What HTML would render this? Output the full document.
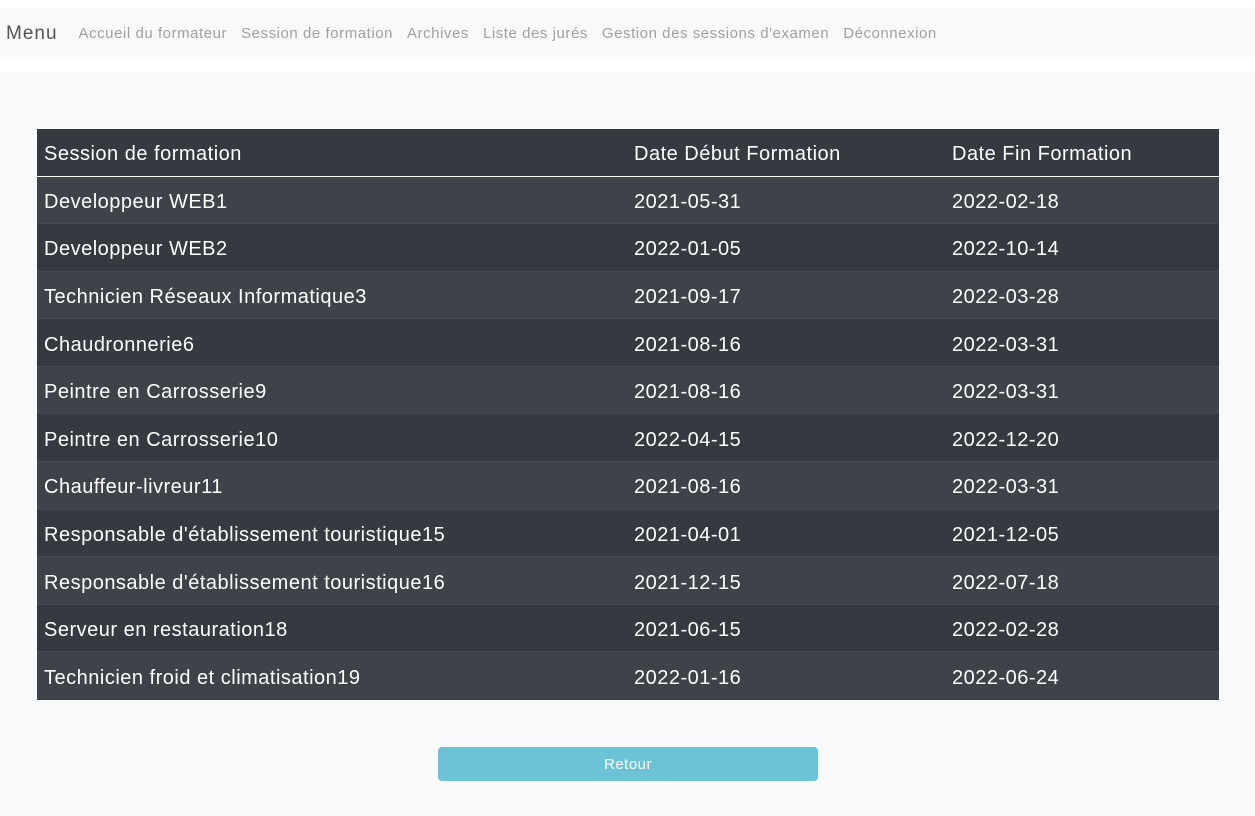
<!DOCTYPE html>
<html><head><meta charset="utf-8"><style>
body{margin:0;background:#f8f9fa;font-family:"Liberation Sans",sans-serif;}
.top{height:8px;background:#fff}
nav{height:49px;box-sizing:border-box;padding-top:2px;background:#f8f9fa;display:flex;align-items:center;font-size:15px;letter-spacing:.55px;color:#a0a0a0}
nav .b{font-size:19px;letter-spacing:1px;color:#555;margin-left:6px;margin-right:21px}
nav span{margin-right:14px}
.gap{height:15px;background:#fff}
table{position:absolute;left:37px;top:129px;width:1182px;border-collapse:collapse;color:#fff;font-size:20px;letter-spacing:.5px}
th{font-weight:normal;text-align:left;background:#343a40;height:47px;border-bottom:1px solid #fff;padding:5px 0 0 7px;box-sizing:border-box}
td{height:47.6px;padding:5px 0 0 7px;box-sizing:border-box;border-top:1px solid #454a51}
tr:nth-child(odd) td{background:#3e434a}
tr:nth-child(even) td{background:#343a40}
.btn{position:absolute;left:438px;top:747px;width:380px;height:34px;background:#6cc3d5;border-radius:4px;color:#fff;font-size:15px;letter-spacing:.5px;text-align:center;line-height:35px}
</style></head><body>
<div class="top"></div>
<nav><span class="b">Menu</span><span>Accueil du formateur</span><span>Session de formation</span><span>Archives</span><span>Liste des jurés</span><span>Gestion des sessions d'examen</span><span>Déconnexion</span></nav>
<div class="gap"></div>
<table>
<thead><tr><th style="width:590px">Session de formation</th><th style="width:318px">Date Début Formation</th><th>Date Fin Formation</th></tr></thead>
<tbody>
<tr><td>Developpeur WEB1</td><td>2021-05-31</td><td>2022-02-18</td></tr>
<tr><td>Developpeur WEB2</td><td>2022-01-05</td><td>2022-10-14</td></tr>
<tr><td>Technicien Réseaux Informatique3</td><td>2021-09-17</td><td>2022-03-28</td></tr>
<tr><td>Chaudronnerie6</td><td>2021-08-16</td><td>2022-03-31</td></tr>
<tr><td>Peintre en Carrosserie9</td><td>2021-08-16</td><td>2022-03-31</td></tr>
<tr><td>Peintre en Carrosserie10</td><td>2022-04-15</td><td>2022-12-20</td></tr>
<tr><td>Chauffeur-livreur11</td><td>2021-08-16</td><td>2022-03-31</td></tr>
<tr><td>Responsable d'établissement touristique15</td><td>2021-04-01</td><td>2021-12-05</td></tr>
<tr><td>Responsable d'établissement touristique16</td><td>2021-12-15</td><td>2022-07-18</td></tr>
<tr><td>Serveur en restauration18</td><td>2021-06-15</td><td>2022-02-28</td></tr>
<tr><td>Technicien froid et climatisation19</td><td>2022-01-16</td><td>2022-06-24</td></tr>
</tbody></table>
<div class="btn">Retour</div>
</body></html>
